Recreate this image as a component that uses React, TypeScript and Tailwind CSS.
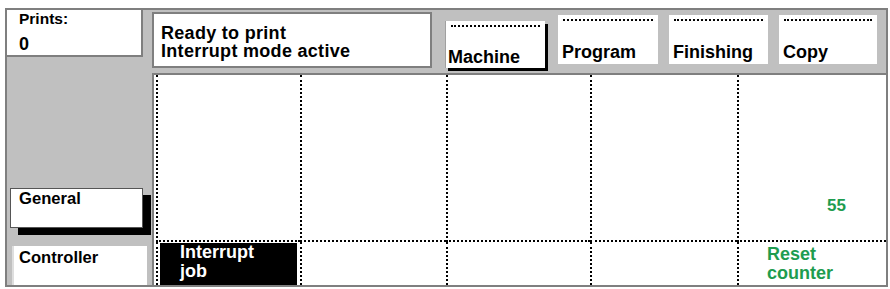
export default function App() {
  const tabs = [
    { label: "Program", ml: "ml-[13px]", w: "w-[100px]" },
    { label: "Finishing", ml: "ml-[11px]", w: "w-[99px]" },
    { label: "Copy", ml: "ml-[11px]", w: "w-[98px]" },
  ];
  return (
    <div className="w-[890px] h-[289px] bg-white pt-[8px] pl-[5px] font-['Liberation_Sans',Arial,sans-serif] font-bold text-black">
      <div className="w-[883px] h-[279px] border-2 border-[#7f7f7f] bg-[#c0c0c0] flex">
        {/* left column */}
        <div className="w-[145px] flex flex-col">
          <div className="w-[136px] h-[47px] bg-white border-r-2 border-b-2 border-[#7f7f7f] pl-[12px] pt-[1px]">
            <div className="text-[15.5px] leading-[15px]">Prints:</div>
            <div className="text-[18px] leading-[18px] mt-[9px]">0</div>
          </div>
          <div className="mt-[131px] ml-[3px] w-[133px] h-[40px] bg-white border border-[#555] shadow-[8px_7px_0_#000] pl-[8px] pt-[1px] text-[16.6px] leading-[17px]">
            General
          </div>
          <div className="mt-[18px] ml-[5px] w-[135px] flex-1 bg-white border-l-2 border-[#dedede] pl-[5px] pt-[3px] text-[16.6px] leading-[17px]">
            Controller
          </div>
        </div>

        {/* right column */}
        <div className="flex-1 flex flex-col">
          <div className="h-[63px] flex items-start">
            <div className="mt-[2px] w-[280px] h-[56px] border-2 border-[#7f7f7f] bg-white pl-[7px] pt-[10px] text-[18px] leading-[18px] tracking-[0.3px]">
              <div>Ready to print</div>
              <div>Interrupt mode active</div>
            </div>
            <div className="ml-[13px] mt-[11px] w-[100px] h-[47px] bg-white border-l border-[#a0a0a0] shadow-[3px_3px_0_#000] flex flex-col">
              <div className="mt-[4px] mx-[5px] border-t-2 border-dotted border-black" />
              <div className="mt-auto pl-[2px] pb-[2px] text-[18px] leading-[18px]">Machine</div>
            </div>
            {tabs.map((t) => (
              <div
                key={t.label}
                className={`${t.ml} mt-[5px] ${t.w} h-[49px] bg-white flex flex-col`}
              >
                <div className="mt-[4px] mx-[5px] border-t-2 border-dotted border-black" />
                <div className="mt-auto pl-[4px] pb-[3px] text-[18px] leading-[18px]">{t.label}</div>
              </div>
            ))}
          </div>

          <div className="flex-1 border-t-2 border-l-2 border-[#7f7f7f] bg-white pl-[2px] grid grid-cols-[144px_146px_144px_147px_1fr] grid-rows-[167px_1fr]">
            <div className="border-l-2 border-b-2 border-dotted border-black" />
            <div className="border-l-2 border-b-2 border-dotted border-black" />
            <div className="border-l-2 border-b-2 border-dotted border-black" />
            <div className="border-l-2 border-b-2 border-dotted border-black" />
            <div className="border-l-2 border-b-2 border-dotted border-black flex items-end justify-end pr-[40px] pb-[26px]">
              <span className="text-[17px] leading-[17px] text-[#1e9c4f]">55</span>
            </div>

            <div className="border-l-2 border-dotted border-black pl-[2px] pr-[3px] pt-[1px] flex">
              <div className="flex-1 bg-black text-white pl-[20px] pt-0 text-[18px] leading-[19px]">
                <div>Interrupt</div>
                <div>job</div>
              </div>
            </div>
            <div className="border-l-2 border-dotted border-black" />
            <div className="border-l-2 border-dotted border-black" />
            <div className="border-l-2 border-dotted border-black" />
            <div className="border-l-2 border-dotted border-black pl-[28px] pt-[3px] text-[18px] leading-[19px] text-[#1e9c4f]">
              <div>Reset</div>
              <div>counter</div>
            </div>
          </div>
        </div>
      </div>
    </div>
  );
}
